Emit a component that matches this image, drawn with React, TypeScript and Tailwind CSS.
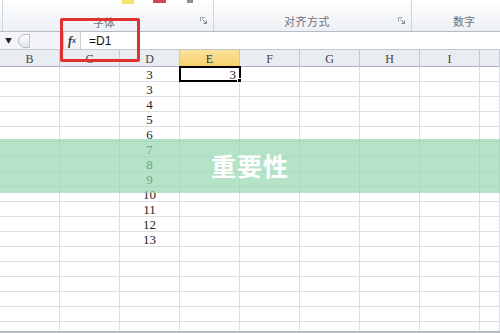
import React from 'react';

const cols = ['B', 'C', 'D', 'E', 'F', 'G', 'H', 'I', ''];
const dValues = ['3', '3', '4', '5', '6', '7', '8', '9', '10', '11', '12', '13', '', '', '', '', '', ''];

const Launcher = () => (
    <svg width="7" height="7" viewBox="0 0 7 7" className="absolute right-[6px] top-[17px]">
        <path d="M0.5 0.5h4M0.5 0.5v4" stroke="#9aa3ad" strokeWidth="1" fill="none" />
        <path d="M2.5 2.5l4 4M6.5 3.5v3h-3" stroke="#7c8591" strokeWidth="1" fill="none" />
    </svg>
);

const Ribbon = () => (
    <div className="flex h-[32px] border-b border-[#b6bcc6] bg-gradient-to-b from-[#ffffff] to-[#eceff4]">
        <div className="w-[3px] border-r border-[#d0d5dc]" />
        <div className="relative w-[211px] border-r border-[#d0d5dc]">
            <div className="absolute left-[119px] top-0 h-[4px] w-[12px] bg-[#f6e36b]" />
            <div className="absolute left-[150px] top-0 h-[3px] w-[13px] bg-[#d9474a]" />
            <div className="absolute left-[184px] top-0 h-[3px] w-[6px] bg-[#8a8f96]" />
            <div className="absolute left-[90px] top-[14px] text-[11px] text-[#6d737b]">字体</div>
            <Launcher />
        </div>
        <div className="relative w-[198px] border-r border-[#d0d5dc]">
            <div className="absolute left-[70px] top-[13px] text-[11px] tracking-[0.5px] text-[#6d737b]">对齐方式</div>
            <Launcher />
        </div>
        <div className="relative flex-1">
            <div className="absolute left-[41px] top-[13px] text-[11px] text-[#6d737b]">数字</div>
        </div>
    </div>
);

const FormulaBar = () => (
    <div className="flex h-[18px] border-b border-[#c3c8cf] bg-[#f3f5f8]">
        <div className="flex w-[63px] items-center">
            <span className="ml-[5px] text-[7px] text-[#222]">▼</span>
            <div className="ml-[6px] h-[14px] w-[12px] rounded-l-full border border-[#b9c0c9] bg-gradient-to-b from-white to-[#dfe4ea]" />
        </div>
        <div className="flex w-[18px] items-center justify-center border-x border-[#c9ced5] font-['Liberation_Serif',serif] text-[12px] font-bold italic text-[#333]">
            f<span className="text-[8px]">x</span>
        </div>
        <div className="flex flex-1 items-center bg-white pl-[8px] font-['Liberation_Sans',sans-serif] text-[12px] text-[#111]">
            =D1
        </div>
    </div>
);

const Grid = () => (
    <div className="font-['Liberation_Serif',serif] text-[13px] text-[#222]">
        <div className="grid h-[17px] grid-cols-[60px_60px_60px_60px_60px_60px_60px_60px_1fr] border-b border-[#aab2bd] bg-[#e9edf2]">
            {cols.map((c, i) => (
                <div
                    key={i}
                    className={
                        c === 'E'
                            ? 'flex items-center justify-center border-r border-[#c4cad2] bg-gradient-to-b from-[#fbe29a] to-[#f4cf68] text-[12px] text-[#333]'
                            : 'flex items-center justify-center border-r border-[#c4cad2] text-[12px] text-[#444]'
                    }
                >
                    {c}
                </div>
            ))}
        </div>
        {dValues.map((v, r) => (
            <div key={r} className="grid h-[15px] grid-cols-[60px_60px_60px_60px_60px_60px_60px_60px_1fr]">
                {cols.map((c, i) => (
                    <div key={i} className="relative flex items-center justify-center border-b border-r border-[#dcdee1] leading-none">
                        {c === 'D' ? v : ''}
                        {c === 'E' && r === 0 && (
                            <div className="absolute -left-px -top-px z-10 flex h-[16px] w-[62px] items-center justify-end border-2 border-black pr-[3px]">
                                3
                                <div className="absolute -bottom-[3px] -right-[3px] h-[5px] w-[5px] border border-white bg-black" />
                            </div>
                        )}
                    </div>
                ))}
            </div>
        ))}
    </div>
);

export default function App() {
    return (
        <div className="relative h-[333px] w-[500px] overflow-hidden bg-white font-['Noto_Sans_CJK_SC',sans-serif]">
            <Ribbon />
            <FormulaBar />
            <Grid />
            <div className="absolute bottom-0 left-0 h-[2px] w-full bg-[#b8bcc2]" />
            <div className="absolute left-[60px] top-[18px] h-[44px] w-[80px] rounded-[2px] border-[3px] border-[#e0302f]" />
            <div className="absolute left-0 top-[139px] flex h-[54px] w-full items-center justify-center bg-[rgba(150,215,175,0.7)]">
                <span className="font-['Noto_Sans_CJK_SC',sans-serif] text-[25px] font-bold tracking-[1px] text-white">重要性</span>
            </div>
        </div>
    );
}
